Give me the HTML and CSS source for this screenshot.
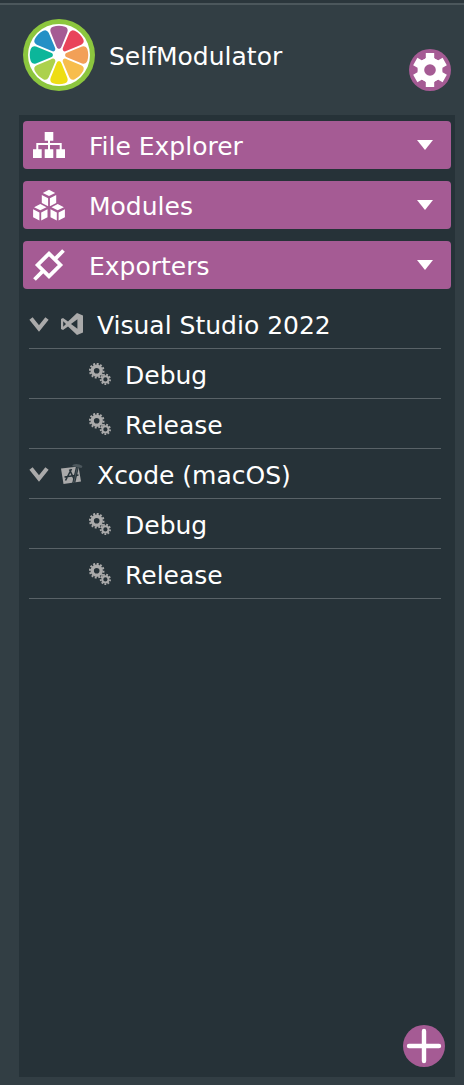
FILE: index.html
```html
<!DOCTYPE html>
<html lang="en">
<head>
<meta charset="utf-8">
<meta name="viewport" content="width=device-width, initial-scale=1">
<title>SelfModulator</title>
<link rel="stylesheet" href="styles.css">
</head>
<body>
<svg class="defs" aria-hidden="true">
  <symbol id="gears" viewBox="0 0 22 22">
    <g fill="none" stroke="currentColor">
      <circle cx="7.7" cy="7.7" r="4.5" stroke-width="3.4"/>
      <circle cx="7.7" cy="7.7" r="6.8" stroke-width="2" pathLength="24" stroke-dasharray="1.1 .9"/>
      <circle cx="16.4" cy="16.4" r="3.1" stroke-width="2"/>
      <circle cx="16.4" cy="16.4" r="4.7" stroke-width="1.8" pathLength="18" stroke-dasharray="1.1 .9"/>
    </g>
  </symbol>
  <symbol id="chevron" viewBox="0 0 20 16">
    <path d="M2 2.5 10 12.5 18 2.5" fill="none" stroke="currentColor" stroke-width="4.2"/>
  </symbol>
  <symbol id="arrow" viewBox="0 0 16 10"><path d="M0 0H16L8 10Z" fill="currentColor"/></symbol>
</svg>

<div class="sidebar">
  <header class="project">
    <svg class="logo" viewBox="-36 -36 72 72" role="img" aria-label="Project icon">
      <defs><path id="slice" d="M0-6Q-2-6-2.8-9L-8.4-23Q-9.6-27-6-28.3Q0-30.2 6-28.3Q9.6-27 8.4-23L2.8-9Q2-6 0-6Z"/></defs>
      <circle r="36" fill="#8cc63e"/><circle r="31" fill="#fff"/>
      <use href="#slice" fill="#a55b94"/>
      <use href="#slice" fill="#e9435a" transform="rotate(45)"/>
      <use href="#slice" fill="#f2a057" transform="rotate(90)"/>
      <use href="#slice" fill="#f7bd4c" transform="rotate(135)"/>
      <use href="#slice" fill="#eedd14" transform="rotate(180)"/>
      <use href="#slice" fill="#acd14c" transform="rotate(225)"/>
      <use href="#slice" fill="#0cb69a" transform="rotate(270)"/>
      <use href="#slice" fill="#2490c6" transform="rotate(315)"/>
    </svg>
    <h1 class="title">SelfModulator</h1>
    <button class="round settings" aria-label="Project settings">
      <svg viewBox="-21 -21 42 42">
        <defs><path id="tooth" d="M-4.2-17H4.2V-12L6.5-10V10L4.2 12V17H-4.2V12L-6.5 10V-10L-4.2-12Z"/></defs>
        <g fill="#fff"><circle r="12.3"/><use href="#tooth"/><use href="#tooth" transform="rotate(60)"/><use href="#tooth" transform="rotate(120)"/></g>
        <circle r="5.8" fill="#a55b94"/>
      </svg>
    </button>
  </header>

  <main class="panel">
    <button class="section">
      <svg class="section-icon" viewBox="0 -3 32 32">
        <path fill="#fff" d="M11.7 0h8.6v8.7h-8.6zM0 17.3h8.7V26H0zM11.7 17.3h8.6V26h-8.6zM23.3 17.3H32V26h-8.7z"/>
        <path d="M16 8V18M4.3 18V12H27.7V18" fill="none" stroke="#fff" stroke-width="2"/>
      </svg>
      <span class="section-name">File Explorer</span>
      <svg class="arrow"><use href="#arrow"/></svg>
    </button>
    <button class="section">
      <svg class="section-icon" viewBox="0 -1 32 32">
        <defs><path id="cube" d="M0-.2 6.2 2.9 0 6-6.2 2.9ZM-7.2 5-.9 8.2V16.2L-7.2 12.9ZM7.2 5 .9 8.2V16.2L7.2 12.9Z"/></defs>
        <g fill="#fff"><use href="#cube" x="16"/><use href="#cube" x="7.3" y="14.3"/><use href="#cube" x="24.7" y="14.3"/></g>
      </svg>
      <span class="section-name">Modules</span>
      <svg class="arrow"><use href="#arrow"/></svg>
    </button>
    <button class="section">
      <svg class="section-icon" viewBox="0 0 32 32"><path d="M16 4.6 27.4 16 16 27.4 4.6 16ZM30.5 1.5 21.7 10.3M1.5 30.5 10.3 21.7" fill="none" stroke="#fff" stroke-width="3.8"/></svg>
      <span class="section-name">Exporters</span>
      <svg class="arrow"><use href="#arrow"/></svg>
    </button>

    <ul class="tree">
      <li>
        <div class="row">
          <button class="toggle" aria-label="Collapse Visual Studio 2022"><svg><use href="#chevron"/></svg></button>
          <svg class="icon" viewBox="0 0 22 22"><path fill="currentColor" fill-rule="evenodd" d="M16 0 22 2.5V19.5L16 22 7 13.4 2 17 0 16V6L2 5 7 8.6ZM2.2 8.2V13.8L5 11ZM16.4 6.3 10 11 16.4 15.7Z"/></svg>
          <span class="label">Visual Studio 2022</span>
        </div>
        <ul class="children">
          <li class="row"><svg class="icon"><use href="#gears"/></svg><span class="label">Debug</span></li>
          <li class="row"><svg class="icon"><use href="#gears"/></svg><span class="label">Release</span></li>
        </ul>
      </li>
      <li>
        <div class="row">
          <button class="toggle" aria-label="Collapse Xcode (macOS)"><svg><use href="#chevron"/></svg></button>
          <svg class="icon" viewBox="0 0 22 22">
            <path fill="currentColor" d="M0 5.5 17.5 3.5 20 18.5 2.5 21Z"/>
            <path d="M4.5 17.5 10.5 6M8.5 6.5 13.5 17M3.5 14 17.5 12" fill="none" stroke="#263238" stroke-width="1.6"/>
            <path d="M16.5 3.5 12.5 21" stroke="#263238" stroke-width="3"/>
            <path d="M16.3 4.5 12.7 20" stroke="#4c575c" stroke-width="1"/>
            <path d="M11.5 2Q16-.5 21.5 3L20.5 5 11.5 3.2Z" fill="#4c575c"/>
          </svg>
          <span class="label">Xcode (macOS)</span>
        </div>
        <ul class="children">
          <li class="row"><svg class="icon"><use href="#gears"/></svg><span class="label">Debug</span></li>
          <li class="row"><svg class="icon"><use href="#gears"/></svg><span class="label">Release</span></li>
        </ul>
      </li>
    </ul>

    <button class="round add" aria-label="Add exporter">
      <svg viewBox="-21 -21 42 42"><path d="M-15 0H15M0-15V15" stroke="#fff" stroke-width="4.4" stroke-linecap="round"/></svg>
    </button>
  </main>
</div>
</body>
</html>
```
FILE: styles.css
```css
* { box-sizing: border-box; }

body {
  margin: 0;
  background: #323e44;
  color: #fff;
  font: 25px/30px "DejaVu Sans", Verdana, sans-serif;
}

button {
  margin: 0;
  padding: 0;
  border: 0;
  background: none;
  color: inherit;
  font: inherit;
  cursor: pointer;
}

svg { display: block; flex: none; }
ul { margin: 0; padding: 0; list-style: none; }
.defs { display: none; }

.sidebar {
  display: flex;
  flex-direction: column;
  min-height: 100vh;
  padding: 0 9px 8px 19px;
  border-top: 3px solid #2b363c;
  box-shadow: inset 0 2px #4c575c;
}

.project {
  display: flex;
  align-items: center;
  height: 112px;
  padding: 16px 4px 24px;
}

.logo { width: 72px; height: 72px; }

.title {
  flex: 1;
  margin: 0;
  padding: 4px 0 0 14px;
  font-size: 25px;
  font-weight: 400;
}

.round {
  width: 42px;
  height: 42px;
  border-radius: 50%;
  background: #a55b94;
}

.settings { align-self: flex-end; }
.round svg { width: 42px; height: 42px; }

.panel {
  display: flex;
  flex: 1;
  flex-direction: column;
  gap: 12px;
  padding: 6px 4px 10px;
  background: #263238;
}

.section {
  display: flex;
  align-items: center;
  height: 48px;
  padding: 0 18px 0 10px;
  border-radius: 4px;
  background: #a55b94;
  text-align: left;
}

.section-icon { width: 32px; height: 32px; }
.section-name { flex: 1; padding: 4px 0 0 24px; }
.arrow { width: 16px; height: 10px; }

.tree {
  margin-top: -2px;
  padding: 0 10px 0 6px;
}

.row {
  display: flex;
  align-items: center;
  height: 50px;
  border-bottom: 1px solid #596267;
}

.toggle { width: 20px; height: 16px; margin-right: 12px; color: #aaa; }
.toggle svg { width: 20px; height: 16px; }
.icon { width: 22px; height: 22px; color: #aaa; }
.label { padding: 4px 0 0 14px; }
.children .row { padding-left: 60px; }

.add {
  align-self: flex-end;
  margin: auto 6px 0 0;
}
```
